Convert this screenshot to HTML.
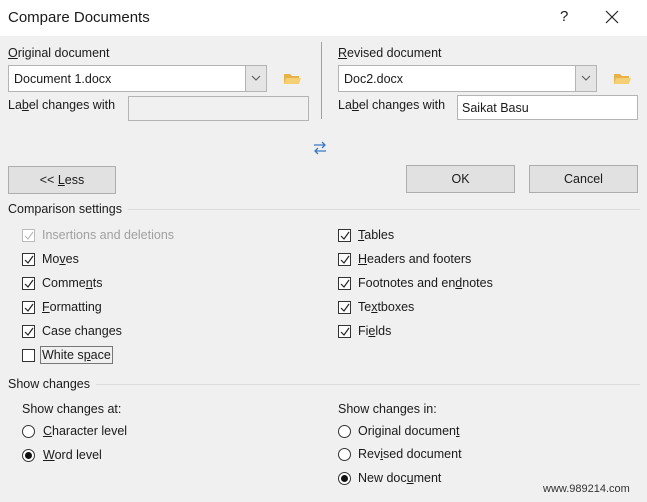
<!DOCTYPE html>
<html><head><style>
body{margin:0;width:647px;height:502px;background:#f0f0f0;font-family:"Liberation Sans",sans-serif;font-size:12.5px;color:#1a1a1a;position:relative;overflow:hidden}
.a{position:absolute;white-space:nowrap}
.title{top:0;left:0;width:647px;height:36px;background:#fff}
.inp{position:absolute;background:#fff;border:1px solid #b4b4b4;box-sizing:border-box}
.btn{position:absolute;background:#e1e1e1;border:1px solid #adadad;box-sizing:border-box;text-align:center;line-height:26px}
.cb{position:absolute;width:13px;height:13px;border:1px solid #333;background:#fff;box-sizing:border-box}
.cb svg{position:absolute;left:1px;top:1px}
.rd{position:absolute;width:13px;height:13px;border:1px solid #333;border-radius:50%;background:#fff;box-sizing:border-box}
.rd.on::after{content:"";position:absolute;left:2px;top:2px;width:7px;height:7px;border-radius:50%;background:#111}
.line{position:absolute;height:1px;background:#dcdcdc}
.dd{position:absolute;width:20px;background:#e5e5e5;border-left:1px solid #b4b4b4}
</style></head><body>
<div class="a title"></div>
<div class="a" style="left:8px;top:9px;font-size:15px">Compare Documents</div>
<div class="a" style="left:560px;top:8px;font-size:15px">?</div>
<svg class="a" style="left:605px;top:10px" width="14" height="14"><path d="M1 1L13 13M13 1L1 13" stroke="#222" stroke-width="1.2"/></svg>

<div class="a" style="left:8px;top:46px"><u>O</u>riginal document</div>
<div class="inp" style="left:8px;top:65px;width:259px;height:27px"><span class="a" style="left:5px;top:6px">Document 1.docx</span><div class="dd" style="right:0;top:0;height:25px"></div><svg class="a" style="right:5px;top:9px" width="10" height="6"><path d="M1 1L5 5L9 1" stroke="#555" fill="none"/></svg></div>
<svg class="a" style="left:283px;top:71px" width="18" height="14"><path d="M1 3h6l2 2h7v8H1z" fill="#e8b24a"/><path d="M3 7h15l-2 6H1z" fill="#f5cf73"/></svg>
<div class="a" style="left:8px;top:98px">La<u>b</u>el changes with</div>
<div class="inp" style="left:128px;top:96px;width:181px;height:25px;background:#f0f0f0"></div>
<div class="a" style="left:321px;top:42px;width:1px;height:77px;background:#a0a0a0"></div>

<div class="a" style="left:338px;top:46px"><u>R</u>evised document</div>
<div class="inp" style="left:338px;top:65px;width:259px;height:27px"><span class="a" style="left:5px;top:6px">Doc2.docx</span><div class="dd" style="right:0;top:0;height:25px"></div><svg class="a" style="right:5px;top:9px" width="10" height="6"><path d="M1 1L5 5L9 1" stroke="#555" fill="none"/></svg></div>
<svg class="a" style="left:613px;top:71px" width="18" height="14"><path d="M1 3h6l2 2h7v8H1z" fill="#e8b24a"/><path d="M3 7h15l-2 6H1z" fill="#f5cf73"/></svg>
<div class="a" style="left:338px;top:98px">La<u>b</u>el changes with</div>
<div class="inp" style="left:457px;top:95px;width:181px;height:25px"><span class="a" style="left:4px;top:5px">Saikat Basu</span></div>

<svg class="a" style="left:313px;top:141px" width="14" height="14"><path d="M1 4h11M9 1l3 3-3 3M13 10H2M5 7l-3 3 3 3" stroke="#3b78c4" fill="none" stroke-width="1.3"/></svg>

<div class="btn" style="left:8px;top:166px;width:108px;height:28px">&lt;&lt; <u>L</u>ess</div>
<div class="btn" style="left:406px;top:165px;width:109px;height:28px">OK</div>
<div class="btn" style="left:529px;top:165px;width:109px;height:28px">Cancel</div>

<div class="a" style="left:8px;top:202px">Comparison settings</div>
<div class="line" style="left:128px;top:209px;width:512px"></div>

<div class="cb" style="left:22px;top:229px;border-color:#bbb"><svg width="10" height="10"><path d="M1 5l3 3 5-7" stroke="#bbb" fill="none" stroke-width="1.2"/></svg></div><div class="a" style="left:42px;top:228px;color:#a0a0a0">Insertions and deletions</div>
<div class="cb" style="left:22px;top:253px"><svg width="10" height="10"><path d="M1 5l3 3 5-7" stroke="#222" fill="none" stroke-width="1.2"/></svg></div><div class="a" style="left:42px;top:252px">Mo<u>v</u>es</div>
<div class="cb" style="left:22px;top:277px"><svg width="10" height="10"><path d="M1 5l3 3 5-7" stroke="#222" fill="none" stroke-width="1.2"/></svg></div><div class="a" style="left:42px;top:276px">Comme<u>n</u>ts</div>
<div class="cb" style="left:22px;top:301px"><svg width="10" height="10"><path d="M1 5l3 3 5-7" stroke="#222" fill="none" stroke-width="1.2"/></svg></div><div class="a" style="left:42px;top:300px"><u>F</u>ormatting</div>
<div class="cb" style="left:22px;top:325px"><svg width="10" height="10"><path d="M1 5l3 3 5-7" stroke="#222" fill="none" stroke-width="1.2"/></svg></div><div class="a" style="left:42px;top:324px">Case chan<u>g</u>es</div>
<div class="cb" style="left:22px;top:349px"></div><div class="a" style="left:40px;top:346px;border:1px solid #777;padding:1px 1px">White s<u>p</u>ace</div>

<div class="cb" style="left:338px;top:229px"><svg width="10" height="10"><path d="M1 5l3 3 5-7" stroke="#222" fill="none" stroke-width="1.2"/></svg></div><div class="a" style="left:358px;top:228px"><u>T</u>ables</div>
<div class="cb" style="left:338px;top:253px"><svg width="10" height="10"><path d="M1 5l3 3 5-7" stroke="#222" fill="none" stroke-width="1.2"/></svg></div><div class="a" style="left:358px;top:252px"><u>H</u>eaders and footers</div>
<div class="cb" style="left:338px;top:277px"><svg width="10" height="10"><path d="M1 5l3 3 5-7" stroke="#222" fill="none" stroke-width="1.2"/></svg></div><div class="a" style="left:358px;top:276px">Footnotes and en<u>d</u>notes</div>
<div class="cb" style="left:338px;top:301px"><svg width="10" height="10"><path d="M1 5l3 3 5-7" stroke="#222" fill="none" stroke-width="1.2"/></svg></div><div class="a" style="left:358px;top:300px">Te<u>x</u>tboxes</div>
<div class="cb" style="left:338px;top:325px"><svg width="10" height="10"><path d="M1 5l3 3 5-7" stroke="#222" fill="none" stroke-width="1.2"/></svg></div><div class="a" style="left:358px;top:324px">Fi<u>e</u>lds</div>

<div class="a" style="left:8px;top:377px">Show changes</div>
<div class="line" style="left:96px;top:384px;width:544px"></div>
<div class="a" style="left:22px;top:402px">Show changes at:</div>
<div class="rd" style="left:22px;top:425px"></div><div class="a" style="left:43px;top:424px"><u>C</u>haracter level</div>
<div class="rd on" style="left:22px;top:449px"></div><div class="a" style="left:43px;top:448px"><u>W</u>ord level</div>
<div class="a" style="left:338px;top:402px">Show changes in:</div>
<div class="rd" style="left:338px;top:425px"></div><div class="a" style="left:358px;top:424px">Original documen<u>t</u></div>
<div class="rd" style="left:338px;top:448px"></div><div class="a" style="left:358px;top:447px">Rev<u>i</u>sed document</div>
<div class="rd on" style="left:338px;top:472px"></div><div class="a" style="left:358px;top:471px">New doc<u>u</u>ment</div>
<div class="a" style="left:543px;top:483px;font-size:11px;color:#333">www.989214.com</div>
</body></html>
